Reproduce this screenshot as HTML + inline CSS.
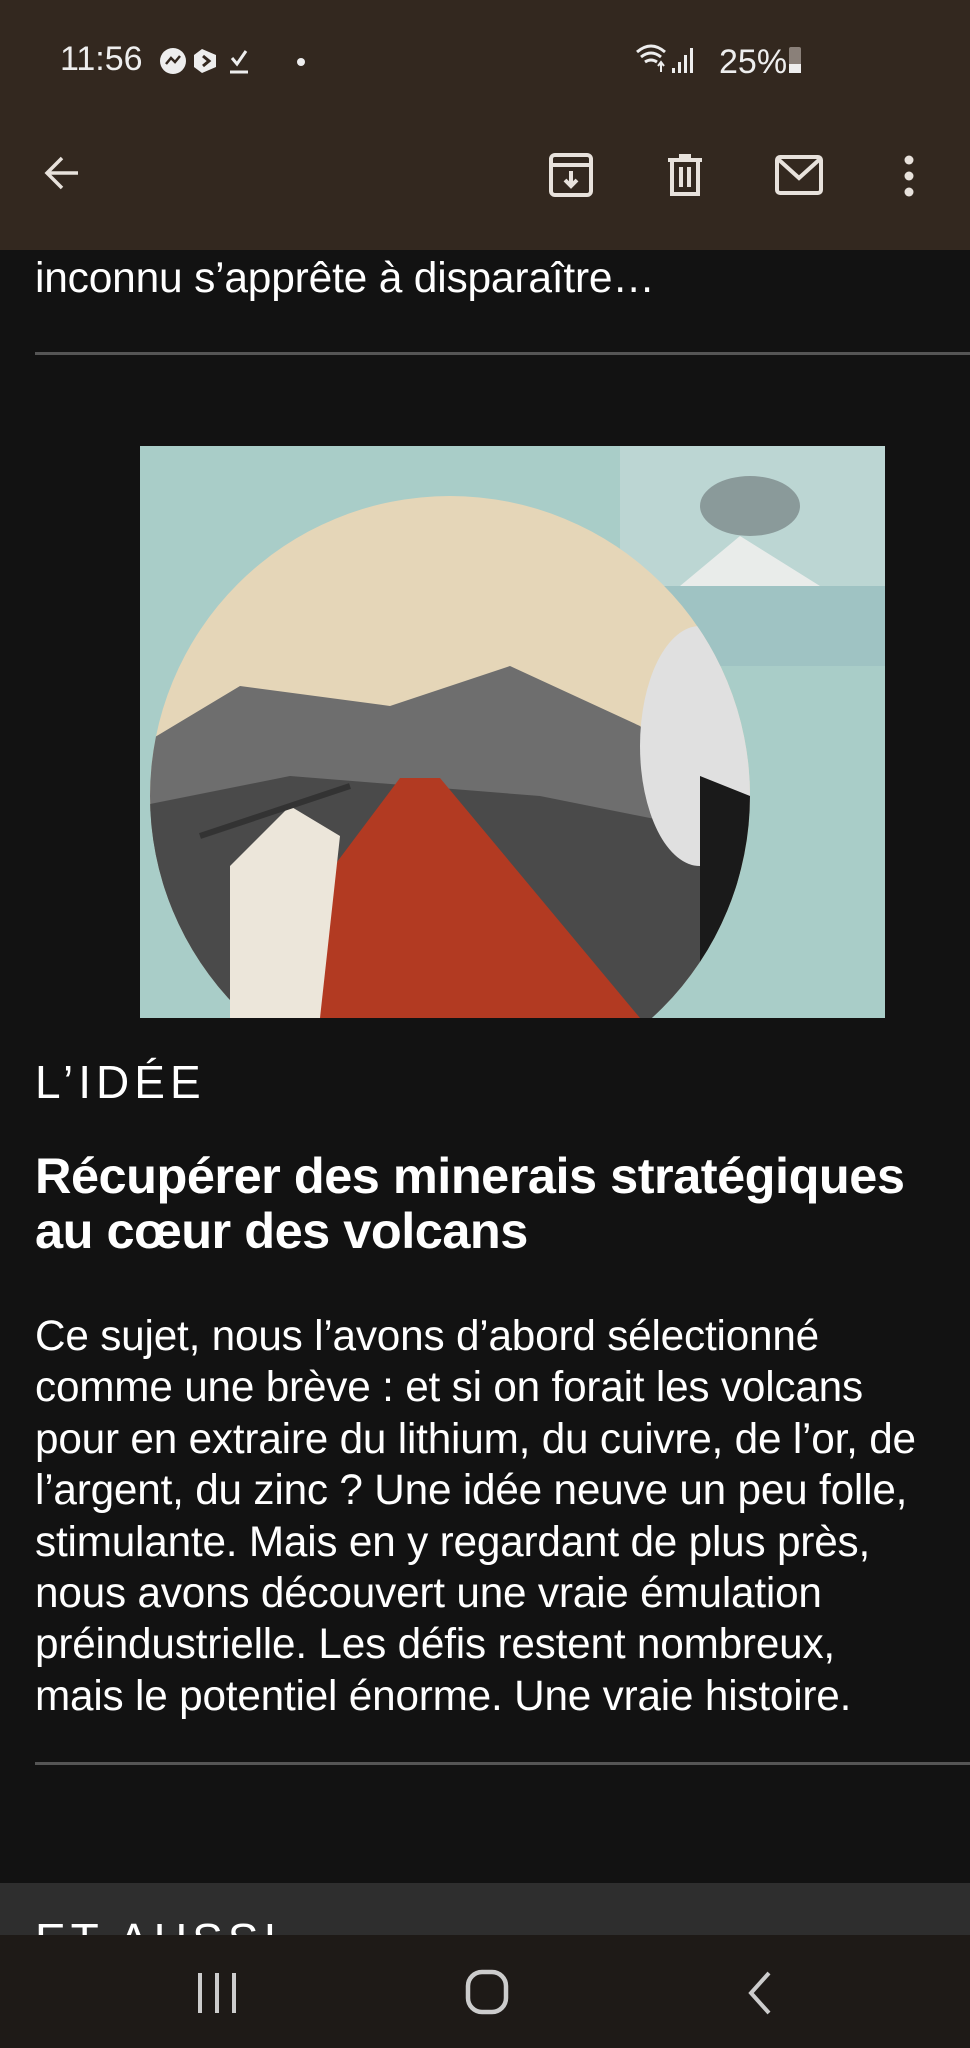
<!DOCTYPE html>
<html><head><meta charset="utf-8"><style>
*{margin:0;padding:0;box-sizing:border-box}
body{width:970px;height:2048px;background:#121212;font-family:"Liberation Sans",Roboto,sans-serif;color:#fff;position:relative;overflow:hidden}
.abs{position:absolute}
.top{left:0;top:0;width:970px;height:250px;background:#33281f}
.t{left:35px;white-space:nowrap}
.hr{left:35px;width:935px;height:3px;background:#555}
.nav{left:0;top:1935px;width:970px;height:113px;background:#1e1a17}
</style></head><body>
<div class="abs t" style="top:254px;font-size:42.5px;line-height:50px;letter-spacing:-0.2px">inconnu s’apprête à disparaître…</div>
<div class="abs top">
 <div class="abs" style="left:60px;top:40px;font-size:34px;color:#eee">11:56</div>
 <svg class="abs" style="left:158px;top:46px" width="150" height="30" viewBox="0 0 150 30">
  <circle cx="15" cy="15" r="13" fill="#eee"/><path d="M8 18l5-6 4 4 5-6" stroke="#33281f" stroke-width="2.5" fill="none"/>
  <path d="M44 3l14 6v12l-14 6-8-6V9z" fill="#eee"/><path d="M45 10l6 5-6 5" stroke="#33281f" stroke-width="3" fill="none"/>
  <path d="M74 12l5 6 9-13M72 26h18" stroke="#eee" stroke-width="3" fill="none"/>
  <circle cx="143" cy="16" r="4" fill="#eee"/>
 </svg>
 <svg class="abs" style="left:635px;top:42px" width="180" height="36" viewBox="0 0 180 36">
  <path d="M2 10q14-12 28 0M6 15q10-8 20 0M10 20q6-4 12 0" stroke="#eee" stroke-width="3" fill="none"/>
  <path d="M26 20v10M23 24l3-4 3 4" stroke="#eee" stroke-width="2" fill="none"/>
  <rect x="37" y="26" width="3" height="5" fill="#eee"/><rect x="43" y="20" width="3" height="11" fill="#eee"/><rect x="49" y="13" width="3" height="18" fill="#eee"/><rect x="55" y="6" width="3" height="25" fill="#eee"/>
  <text x="84" y="31" font-size="34" fill="#eee" font-family="Liberation Sans">25%</text>
  <rect x="154" y="5" width="12" height="26" rx="2" fill="#8a8079"/><rect x="154" y="22" width="12" height="9" fill="#eee"/>
 </svg>
 <svg class="abs" style="left:40px;top:150px" width="46" height="46" viewBox="0 0 46 46"><path d="M38 23H8M22 8L7 23l15 15" stroke="#e8e2dc" stroke-width="3.5" fill="none"/></svg>
 <svg class="abs" style="left:548px;top:152px" width="46" height="46" viewBox="0 0 46 46"><rect x="3" y="3" width="40" height="40" rx="4" stroke="#e8e2dc" stroke-width="4" fill="none"/><path d="M3 13h40M23 19v15M17 28l6 6 6-6" stroke="#e8e2dc" stroke-width="4" fill="none"/></svg>
 <svg class="abs" style="left:664px;top:152px" width="42" height="46" viewBox="0 0 42 46"><path d="M4 8h34M15 4h12M8 8v34h26V8M17 15v20M25 15v20" stroke="#e8e2dc" stroke-width="4" fill="none"/></svg>
 <svg class="abs" style="left:774px;top:154px" width="50" height="42" viewBox="0 0 50 42"><rect x="3" y="3" width="44" height="36" rx="3" stroke="#e8e2dc" stroke-width="4" fill="none"/><path d="M4 5l21 19L46 5" stroke="#e8e2dc" stroke-width="4" fill="none"/></svg>
 <svg class="abs" style="left:896px;top:154px" width="26" height="44" viewBox="0 0 26 44"><circle cx="13" cy="6" r="4.5" fill="#e8e2dc"/><circle cx="13" cy="22" r="4.5" fill="#e8e2dc"/><circle cx="13" cy="38" r="4.5" fill="#e8e2dc"/></svg>
</div>
<div class="abs hr" style="top:352px"></div>
<svg class="abs" style="left:140px;top:446px" width="745" height="572" viewBox="0 0 745 572">
 <defs><clipPath id="c"><circle cx="310" cy="350" r="300"/></clipPath></defs>
 <rect width="745" height="572" fill="#a9cdc8"/>
 <rect x="480" y="0" width="265" height="220" fill="#bcd6d3"/>
 <path d="M540 140l60-50 80 50z" fill="#e9ecea"/><rect x="480" y="140" width="265" height="80" fill="#9fc3c3"/>
 <ellipse cx="610" cy="60" rx="50" ry="30" fill="#8a9a9a"/>
 <g clip-path="url(#c)">
  <rect width="745" height="572" fill="#e5d6b8"/>
  <path d="M0 300l100-60 150 20 120-40 130 60 80 80v212H0z" fill="#6e6e6e"/>
  <path d="M0 360l150-30 250 20 200 40v182H0z" fill="#4a4a4a"/>
  <path d="M80 572l180-240h40l200 240z" fill="#b23a22"/>
  <ellipse cx="560" cy="300" rx="60" ry="120" fill="#e0e0e0"/>
  <path d="M560 330l100 40v200H560z" fill="#1a1a1a"/>
 </g>
 <path d="M90 420l60-60 50 30-20 182H90z" fill="#ece6da"/>
 <path d="M60 390l150-50" stroke="#333" stroke-width="6"/>
</svg>
<div class="abs t" style="top:1056px;font-size:46px;letter-spacing:5px;line-height:52px">L’IDÉE</div>
<div class="abs t" style="top:1148px;font-size:50.5px;font-weight:bold;line-height:55px;letter-spacing:-0.5px">Récupérer des minerais stratégiques<br>au cœur des volcans</div>
<div class="abs t" style="top:1310px;font-size:42.3px;line-height:51.4px;letter-spacing:-0.2px">Ce sujet, nous l’avons d’abord sélectionné<br>comme une brève : et si on forait les volcans<br>pour en extraire du lithium, du cuivre, de l’or, de<br>l’argent, du zinc ? Une idée neuve un peu folle,<br>stimulante. Mais en y regardant de plus près,<br>nous avons découvert une vraie émulation<br>préindustrielle. Les défis restent nombreux,<br>mais le potentiel énorme. Une vraie histoire.</div>
<div class="abs hr" style="top:1762px"></div>
<div class="abs" style="left:0;top:1883px;width:970px;height:52px;background:#2e2e2e;overflow:hidden"><div style="position:absolute;left:35px;top:30px;font-size:46px;letter-spacing:5px;color:#fff">ET AUSSI</div></div>
<div class="abs nav">
 <svg class="abs" style="left:196px;top:36px" width="42" height="44" viewBox="0 0 42 44"><path d="M4 2v40M21 2v40M38 2v40" stroke="#ccc" stroke-width="4"/></svg>
 <svg class="abs" style="left:465px;top:34px" width="44" height="46" viewBox="0 0 44 46"><rect x="3" y="3" width="38" height="40" rx="14" stroke="#ccc" stroke-width="4.5" fill="none"/></svg>
 <svg class="abs" style="left:745px;top:36px" width="30" height="44" viewBox="0 0 30 44"><path d="M24 2L6 22l18 20" stroke="#ccc" stroke-width="4" fill="none"/></svg>
</div>
</body></html>
